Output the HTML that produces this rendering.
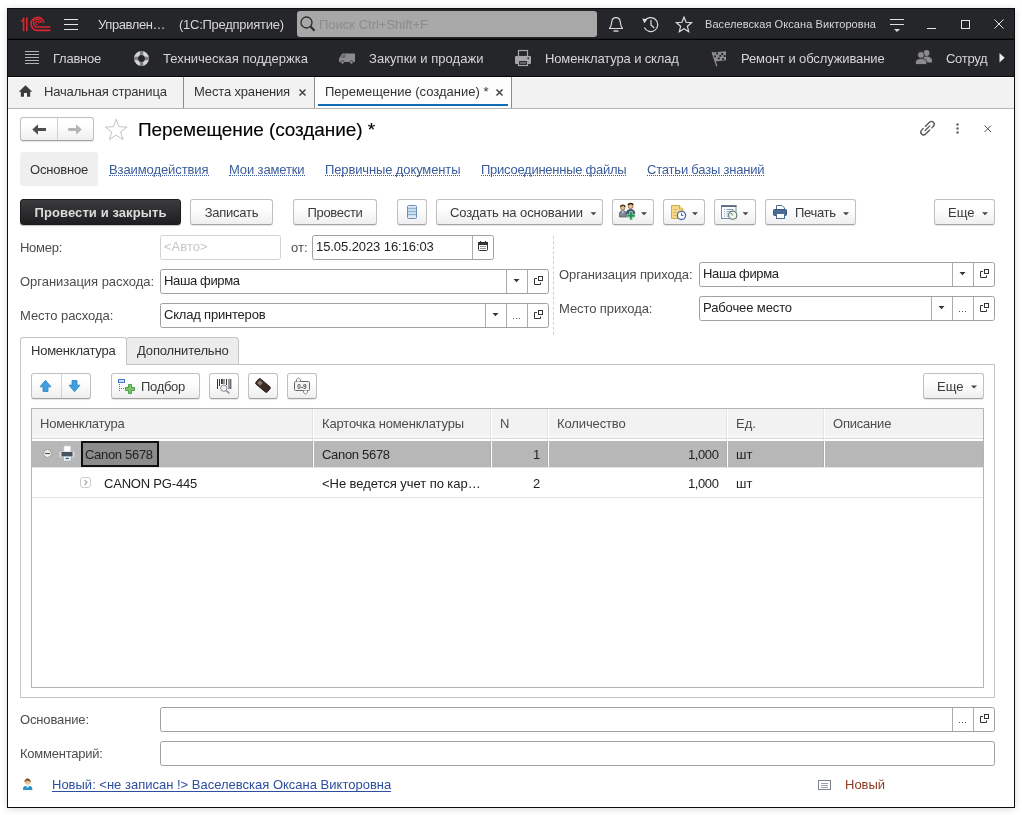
<!DOCTYPE html>
<html lang="ru">
<head>
<meta charset="utf-8">
<title>Перемещение (создание) *</title>
<style>
html,body{margin:0;padding:0;}
body{width:1022px;height:815px;overflow:hidden;background:#fff;font-family:"Liberation Sans",Arial,sans-serif;font-size:13px;color:#333;position:relative;}
.a{position:absolute;white-space:nowrap;}
.t{position:absolute;white-space:nowrap;line-height:16px;height:16px;}
#shadow{left:8px;top:10px;width:1006px;height:798px;box-shadow:0 0 7px 1px rgba(0,0,0,.15);}
#win{left:7px;top:8px;width:1006px;height:798px;border:1px solid #0d0d0f;background:#fff;}
#dark{left:8px;top:9px;width:1006px;height:67px;background:#25262a;border-bottom:1px solid #050506;}
#darksep{left:8px;top:38px;width:1006px;height:2px;background:linear-gradient(#1a1b1d 50%,#050506 50%);}
#search{left:297px;top:11px;width:300px;height:26px;background:#a8a8a8;border-radius:3px;}
.w{color:#d6d6d6;}
#tabbar{left:8px;top:77px;width:1006px;height:32px;background:#f2f2f2;border-top:1px solid #fff;border-bottom:1px solid #b5b5b5;box-sizing:border-box;}
.tabsep{top:77px;width:1px;height:31px;background:#8c8c8c;}
#acttab{left:315px;top:77px;width:196px;height:31px;background:#fdfdfd;}
#actline{left:318px;top:104px;width:190px;height:2px;background:#106cb4;}
.btn{position:absolute;box-sizing:border-box;height:26px;border:1px solid #c0c0c0;border-bottom-color:#a2a2a2;border-radius:3px;background:linear-gradient(#fff 30%,#efefef);box-shadow:0 1px 1px rgba(0,0,0,.10);white-space:nowrap;line-height:26px;text-align:center;color:#3a3a3a;}
.fld{position:absolute;box-sizing:border-box;height:25px;border:1px solid #a0a0a0;border-radius:2.5px;background:#fff;white-space:nowrap;line-height:21px;padding-left:3px;color:#222;}
.fsep{position:absolute;top:0;width:1px;height:23px;background:#ababab;}
.lbl{color:#4c4c4c;}
.colsep{top:409px;width:1px;height:58px;background:#fff;box-shadow:-1px 0 0 rgba(0,0,0,.06);}
.dl{color:#3a5c9c;height:13px;border-bottom:1px dotted #3a5c9c;}
.sl{color:#2e4f9e;height:14px;border-bottom:1px solid #2e4f9e;}
.dk{background:linear-gradient(#3c3c3e,#1e1e20);border-color:#1c1c1e;color:#dcdcdc;font-weight:bold;letter-spacing:.28px;box-shadow:0 1px 1px rgba(0,0,0,.25);}
.caret{position:absolute;width:0;height:0;border-left:3px solid transparent;border-right:3px solid transparent;border-top:3px solid #444;}
</style>
</head>
<body>
<div id="root" style="position:absolute;left:0;top:0;width:1022px;height:815px;will-change:transform;">
<div class="a" id="shadow"></div>
<div class="a" id="win"></div>
<div class="a" id="dark"></div>
<div class="a" id="darksep"></div>

<!-- TITLE BAR -->
<div class="t w" style="left:98px;top:17px;letter-spacing:-0.398px;">Управлен…</div>
<div class="t w" style="left:179px;top:17px;letter-spacing:-0.263px;">(1С:Предприятие)</div>
<div class="a" id="search"></div>
<div class="t" style="left:319px;top:17px;color:#8c8c8c;">Поиск Ctrl+Shift+F</div>
<div class="t w" style="left:705px;top:16px;font-size:11px;letter-spacing:.08px;">Васелевская Оксана Викторовна</div>

<!-- NAV BAR -->
<div class="t w" style="left:53px;top:51px;letter-spacing:-0.239px;">Главное</div>
<div class="t w" style="left:163px;top:51px;">Техническая поддержка</div>
<div class="t w" style="left:369px;top:51px;letter-spacing:0.036px;">Закупки и продажи</div>
<div class="t w" style="left:545px;top:51px;letter-spacing:-0.133px;">Номенклатура и склад</div>
<div class="t w" style="left:741px;top:51px;letter-spacing:-0.119px;">Ремонт и обслуживание</div>
<div class="t w" style="left:946px;top:51px;letter-spacing:-0.272px;">Сотруд</div>

<!-- OPEN WINDOWS TAB BAR -->
<div class="a" id="tabbar"></div>
<div class="a tabsep" style="left:183px;"></div>
<div class="a tabsep" style="left:314px;"></div>
<div class="a" id="acttab"></div>
<div class="a tabsep" style="left:511px;"></div>
<div class="a" id="actline"></div>
<div class="t" style="left:44px;top:84px;letter-spacing:-0.166px;">Начальная страница</div>
<div class="t" style="left:194px;top:84px;letter-spacing:-0.158px;">Места хранения</div>
<div class="t" style="left:325px;top:84px;">Перемещение (создание) *</div>


<!-- ICONS: header -->
<svg class="a" style="left:0;top:0;" width="1022" height="110" viewBox="0 0 1022 110" fill="none">
<!-- 1C logo -->
<g stroke="#dc2530" stroke-width="1.6" fill="none">
<path d="M21.3 21.6L23.6 19.2M23.6 17.6V31.3M26.8 17.4V31.3"/>
<path d="M43.9 22.8A6.5 6.5 0 1 0 37.5 30.4H50.4"/>
<path d="M41.3 23A3.9 3.9 0 1 0 37.5 27H50.4" stroke-width="1.5"/>
<path d="M39.2 23.4A1.7 1.7 0 1 0 37.5 24.8" stroke-width="1.2"/>
</g>
<!-- hamburger -->
<path d="M64 19.5H78M64 24.5H78M64 29.5H78" stroke="#e4e4e4" stroke-width="1"/>
<!-- search icon -->
<circle cx="306.500" cy="22.500" r="5.500" stroke="#2a2a2a" stroke-width="1.300"/>
<path d="M310.500 26.500L314.500 30.800" stroke="#2a2a2a" stroke-width="2"/>
<!-- bell -->
<path d="M609.500 28.500H622.500C620.500 26.500 620.500 24 620.200 21.500C619.800 18.500 617.800 17.600 616 17.600C614.200 17.600 612.200 18.500 611.800 21.500C611.500 24 611.500 26.500 609.500 28.500Z" stroke="#dedede" stroke-width="1.200" stroke-linejoin="round"/>
<path d="M613.500 31H618.500" stroke="#dedede" stroke-width="1.400"/>
<!-- history -->
<path d="M644.600 21.200A7 7 0 1 1 644.400 27.500" stroke="#dedede" stroke-width="1.200"/>
<path d="M642.300 18.600L647.300 19.200L644.300 23.200Z" fill="#dedede"/>
<path d="M651 20V25L654.200 28" stroke="#dedede" stroke-width="1.200"/>
<!-- star -->
<path d="M684 17.200L686.100 22.300L691.600 22.700L687.400 26.300L688.700 31.700L684 28.800L679.300 31.700L680.600 26.300L676.400 22.700L681.900 22.300Z" stroke="#dedede" stroke-width="1.200" stroke-linejoin="miter"/>
<!-- menu lines -->
<path d="M890 19.500H904M890 24.500H904" stroke="#dedede" stroke-width="1"/>
<path d="M894 29H900L897 32Z" fill="#dedede"/>
<!-- window buttons -->
<path d="M927 28.500H936" stroke="#e6e6e6" stroke-width="1"/>
<rect x="961.500" y="20.500" width="8" height="8" stroke="#e6e6e6" stroke-width="1"/>
<path d="M994.500 19.500L1003.500 28.500M1003.500 19.500L994.500 28.500" stroke="#e6e6e6" stroke-width="1"/>
<!-- nav: main lines -->
<path d="M25 51.500H39M25 54.500H39M25 57.500H39M25 60.500H39M25 63.500H39" stroke="#b4b4b4" stroke-width="1"/>
<!-- lifebuoy -->
<circle cx="141.500" cy="58.500" r="5.500" stroke="#d6d6d6" stroke-width="4"/>
<path d="M141.500 51V55M141.500 62V66M134 58.500H138M145 58.500H149" stroke="#808080" stroke-width="3.400"/>
<!-- van -->
<path d="M339 62V58.500L342.500 53.500H355V62Z" fill="#8c8c8c"/>
<circle cx="342.500" cy="62.300" r="1.700" fill="#8c8c8c" stroke="#242528" stroke-width=".6"/>
<circle cx="351.500" cy="62.300" r="1.700" fill="#8c8c8c" stroke="#242528" stroke-width=".6"/>
<path d="M340.600 58L343 54.600H345.600V58Z" fill="#6a6a6a"/>
<!-- printer -->
<rect x="518.500" y="50.500" width="9" height="6" stroke="#a6a6a6" stroke-width="1.200"/>
<rect x="515" y="56" width="16" height="8" rx="1" fill="#a6a6a6"/>
<rect x="518.500" y="60.500" width="9" height="5" fill="#242528" stroke="#a6a6a6" stroke-width="1.200"/>
<path d="M520 63H526" stroke="#a6a6a6" stroke-width="1"/>
<rect x="527.500" y="57.500" width="1.500" height="1.500" fill="#242528"/>
<!-- flag -->
<path d="M712 52.400L726 51.200V60.300L715.300 61.600Z" fill="#8e8e8e"/>
<path d="M712.300 52.500L716.600 65.800" stroke="#8e8e8e" stroke-width="1.300" stroke-linecap="round"/>
<path d="M716.200 52.600h1.9v1.8h-1.9zM721.300 53.100h1.9v1.8h-1.9zM714.100 55.400h1.9v1.8h-1.9zM719.300 54.900h1.9v1.8h-1.9zM723.700 55.100h1.9v1.8h-1.9zM717.800 57.500h1.9v1.8h-1.9zM722.100 58.200h1.9v1.8h-1.9z" fill="#222225"/>
<!-- people -->
<g fill="#8c8c8c">
<circle cx="926.500" cy="53" r="3"/>
<path d="M921.500 61C921.500 57.500 924 56.500 926.500 56.500C929 56.500 932 57.500 932 61V62.500H921.500Z"/>
<circle cx="921" cy="55" r="3.400" stroke="#242528" stroke-width=".8"/>
<path d="M915.500 64.500V62.500C915.500 59.500 918 58.500 921 58.500C924 58.500 926.800 59.500 926.800 62.500V64.500Z" stroke="#242528" stroke-width=".8"/>
</g>
<!-- scroll arrow -->
<path d="M999.500 53L1004.700 57.700L999.500 62.400Z" fill="#ececec"/>
<!-- home -->
<path d="M18.800 91.800L25.500 85.200L32.200 91.800H30.200V96.800H27V93H24V96.800H20.800V91.800Z" fill="#3c3c3c"/>
<!-- tab close x -->
<path d="M299.500 89.500L305.500 95.500M305.500 89.500L299.500 95.500" stroke="#444" stroke-width="1.500"/>
<path d="M496.500 89.500L502.500 95.500M502.500 89.500L496.500 95.500" stroke="#444" stroke-width="1.500"/>
</svg>

<!-- FORM HEADER -->
<div class="btn" style="left:20px;top:117px;width:74px;height:24px;"></div>
<div class="a" style="left:57px;top:118px;width:1px;height:22px;background:#d2d2d2;"></div>
<div class="t" style="left:138px;top:119px;font-size:19px;line-height:22px;height:22px;color:#000;letter-spacing:-.08px;-webkit-text-stroke:.12px #000;">Перемещение (создание) *</div>

<!-- FORM NAV LINKS -->
<div class="a" style="left:20px;top:152px;width:78px;height:34px;background:#efefef;border-radius:3px;"></div>
<div class="t" style="left:30px;top:162px;letter-spacing:-0.197px;">Основное</div>
<div class="t dl" style="left:109px;top:162px;letter-spacing:-0.089px;">Взаимодействия</div>
<div class="t dl" style="left:229px;top:162px;letter-spacing:-0.129px;">Мои заметки</div>
<div class="t dl" style="left:325px;top:162px;letter-spacing:-0.125px;">Первичные документы</div>
<div class="t dl" style="left:481px;top:162px;letter-spacing:-0.259px;">Присоединенные файлы</div>
<div class="t dl" style="left:647px;top:162px;letter-spacing:-0.198px;">Статьи базы знаний</div>

<!-- COMMAND BAR -->
<div class="btn dk" style="left:20px;top:199px;width:161px;letter-spacing:0.092px;">Провести и закрыть</div>
<div class="btn" style="left:190px;top:199px;width:83px;letter-spacing:-0.258px;">Записать</div>
<div class="btn" style="left:293px;top:199px;width:84px;letter-spacing:-0.289px;">Провести</div>
<div class="btn" style="left:397px;top:199px;width:30px;"></div>
<div class="btn" style="left:436px;top:199px;width:167px;text-align:left;padding-left:13px;letter-spacing:-0.094px;">Создать на основании</div>
<div class="btn" style="left:612px;top:199px;width:42px;"></div>
<div class="btn" style="left:663px;top:199px;width:42px;"></div>
<div class="btn" style="left:714px;top:199px;width:42px;"></div>
<div class="btn" style="left:765px;top:199px;width:91px;text-align:left;padding-left:29px;letter-spacing:-0.332px;">Печать</div>
<div class="btn" style="left:934px;top:199px;width:61px;text-align:left;padding-left:13px;">Еще</div>

<!-- FIELDS LEFT -->
<div class="t lbl" style="left:20px;top:240px;letter-spacing:-0.273px;">Номер:</div>
<div class="fld" style="left:160px;top:235px;width:121px;border-color:#d2d2d2;color:#c6c6c6;">&lt;Авто&gt;</div>
<div class="t lbl" style="left:291px;top:240px;">от:</div>
<div class="fld" style="left:312px;top:235px;width:182px;letter-spacing:-0.08px;">15.05.2023 16:16:03<div class="fsep" style="left:159px;"></div></div>
<div class="t lbl" style="left:20px;top:274px;letter-spacing:-0.031px;">Организация расхода:</div>
<div class="fld" style="left:160px;top:269px;width:389px;letter-spacing:-0.355px;">Наша фирма<div class="fsep" style="left:345px;"></div><div class="fsep" style="left:366px;"></div></div>
<div class="t lbl" style="left:20px;top:308px;letter-spacing:-0.06px;">Место расхода:</div>
<div class="fld" style="left:160px;top:303px;width:389px;letter-spacing:-0.197px;">Склад принтеров<div class="fsep" style="left:324px;"></div><div class="fsep" style="left:345px;"></div><div class="fsep" style="left:366px;"></div></div>

<div class="a" style="left:553px;top:236px;width:0;height:99px;border-left:1px dashed #d0d0d0;"></div>

<!-- FIELDS RIGHT -->
<div class="t lbl" style="left:559px;top:267px;letter-spacing:-0.094px;">Организация прихода:</div>
<div class="fld" style="left:699px;top:262px;width:296px;letter-spacing:-0.355px;">Наша фирма<div class="fsep" style="left:252px;"></div><div class="fsep" style="left:273px;"></div></div>
<div class="t lbl" style="left:559px;top:301px;letter-spacing:-0.087px;">Место прихода:</div>
<div class="fld" style="left:699px;top:296px;width:296px;letter-spacing:-0.109px;">Рабочее место<div class="fsep" style="left:231px;"></div><div class="fsep" style="left:252px;"></div><div class="fsep" style="left:273px;"></div></div>

<!-- PAGES -->
<div class="a" style="left:20px;top:364px;width:975px;height:334px;box-sizing:border-box;border:1px solid #c4c4c4;"></div>
<div class="a" style="left:126px;top:337px;width:113px;height:28px;box-sizing:border-box;border:1px solid #c4c4c4;background:#ececec;border-radius:3px 3px 0 0;"></div>
<div class="a" style="left:20px;top:337px;width:107px;height:28px;box-sizing:border-box;border:1px solid #c4c4c4;border-bottom:none;background:#fff;border-radius:3px 3px 0 0;"></div>
<div class="t" style="left:31px;top:343px;letter-spacing:-0.237px;">Номенклатура</div>
<div class="t" style="left:137px;top:343px;letter-spacing:-0.152px;">Дополнительно</div>

<!-- TABLE TOOLBAR -->
<div class="btn" style="left:31px;top:373px;width:60px;"></div>
<div class="a" style="left:61px;top:374px;width:1px;height:24px;background:#d2d2d2;"></div>
<div class="btn" style="left:111px;top:373px;width:89px;text-align:left;padding-left:29px;letter-spacing:-0.314px;">Подбор</div>
<div class="btn" style="left:209px;top:373px;width:30px;"></div>
<div class="btn" style="left:248px;top:373px;width:30px;"></div>
<div class="btn" style="left:287px;top:373px;width:30px;"></div>
<div class="btn" style="left:923px;top:373px;width:61px;text-align:left;padding-left:13px;">Еще</div>

<!-- TABLE -->
<div class="a" style="left:31px;top:408px;width:953px;height:280px;box-sizing:border-box;border:1px solid #b4b4b4;background:#fff;"></div>
<div class="a" style="left:32px;top:409px;width:951px;height:29px;background:linear-gradient(#f2f2f2 85%,#f7f7f7);"></div>
<div class="a" style="left:32px;top:438px;width:951px;height:1px;background:#d8d8d8;"></div>
<div class="a" style="left:32px;top:441px;width:951px;height:26px;background:#b7b7b7;"></div>
<div class="a" style="left:32px;top:467px;width:951px;height:1px;background:#e4e4e4;"></div>
<div class="a" style="left:32px;top:497px;width:951px;height:1px;background:#e4e4e4;"></div>
<div class="a colsep" style="left:313px;"></div><div class="a colsep" style="left:491px;"></div><div class="a colsep" style="left:548px;"></div><div class="a colsep" style="left:727px;"></div><div class="a colsep" style="left:824px;"></div>
<div class="t lbl" style="left:40px;top:416px;letter-spacing:-0.237px;">Номенклатура</div>
<div class="t lbl" style="left:322px;top:416px;letter-spacing:-0.154px;">Карточка номенклатуры</div>
<div class="t lbl" style="left:500px;top:416px;">N</div>
<div class="t lbl" style="left:557px;top:416px;letter-spacing:-0.121px;">Количество</div>
<div class="t lbl" style="left:736px;top:416px;">Ед.</div>
<div class="t lbl" style="left:833px;top:416px;letter-spacing:-0.204px;">Описание</div>

<div class="a" style="left:81px;top:441px;width:78px;height:26px;box-sizing:border-box;border:2px solid #111;background:#8c8c8c;"></div>
<div class="t" style="left:85px;top:447px;color:#222;letter-spacing:-0.304px;">Canon 5678</div>
<div class="t" style="left:322px;top:447px;color:#222;letter-spacing:-0.304px;">Canon 5678</div>
<div class="t" style="left:533px;top:447px;color:#222;">1</div>
<div class="t" style="left:688px;top:447px;color:#222;letter-spacing:-0.409px;">1,000</div>
<div class="t" style="left:736px;top:447px;color:#222;">шт</div>

<div class="t" style="left:104px;top:476px;color:#222;letter-spacing:-0.198px;">CANON PG-445</div>
<div class="t" style="left:322px;top:476px;color:#222;letter-spacing:-0.051px;">&lt;Не ведется учет по кар…</div>
<div class="t" style="left:533px;top:476px;color:#222;">2</div>
<div class="t" style="left:688px;top:476px;color:#222;letter-spacing:-0.409px;">1,000</div>
<div class="t" style="left:736px;top:476px;color:#222;">шт</div>

<!-- BOTTOM FIELDS -->
<div class="t lbl" style="left:20px;top:712px;letter-spacing:-0.14px;">Основание:</div>
<div class="fld" style="left:160px;top:707px;width:835px;"><div class="fsep" style="left:791px;"></div><div class="fsep" style="left:812px;"></div></div>
<div class="t lbl" style="left:20px;top:746px;letter-spacing:-0.242px;">Комментарий:</div>
<div class="fld" style="left:160px;top:741px;width:835px;"></div>

<!-- FOOTER -->
<div class="t sl" style="left:52px;top:777px;">Новый: &lt;не записан !&gt; Васелевская Оксана Викторовна</div>
<div class="t" style="left:845px;top:777px;color:#8e3a20;">Новый</div>
<!-- ICONS: form -->
<svg class="a" style="left:0;top:108px;" width="1022" height="707" viewBox="0 108 1022 707" fill="none">
<path d="M32.300 129.500L38 124.200V128H46V131H38V134.800Z" fill="#4e4e4e"/>
<path d="M81.800 129.500L76.100 124.200V128H68.200V131H76.100V134.800Z" fill="#b4b4b4"/>
<path d="M116.200 119.200L118.900 126.800L127.100 127L120.600 131.900L123 139.600L116.200 135L109.400 139.600L111.800 131.900L105.300 127L113.500 126.800Z" stroke="#c2c2c2" stroke-width="1" stroke-linejoin="miter"/>
<g stroke="#555" stroke-width="1.300" stroke-linecap="round" transform="rotate(-45 927.500 128.200)"><path d="M927.200 125.400H933A2.800 2.800 0 0 1 933 131H930.800"/><path d="M927.800 131H922A2.800 2.800 0 0 1 922 125.400H924.200"/><path d="M924.200 128.200H930.800"/></g>
<circle cx="957.5" cy="124.4" r="1.25" fill="#666"/><circle cx="957.5" cy="128.4" r="1.25" fill="#666"/><circle cx="957.5" cy="132.4" r="1.25" fill="#666"/>
<path d="M984.500 125.500L991 132M991 125.500L984.500 132" stroke="#555" stroke-width="1"/>
<rect x="407.500" y="205.500" width="9" height="13" rx="1" fill="#dfeaf5" stroke="#6a8fb8"/>
<path d="M408 208.500H416M408 211.500H416M408 214.500H416" stroke="#8fb2d6" stroke-width="1.600"/>
<path d="M590.5 212.2H596.5L593.5 215.3Z" fill="#444"/>
<path d="M641.0 212.2H647.0L644.0 215.3Z" fill="#444"/>
<path d="M692.0 212.2H698.0L695.0 215.3Z" fill="#444"/>
<path d="M742.5 212.2H748.5L745.5 215.3Z" fill="#444"/>
<path d="M843.0 212.2H849.0L846.0 215.3Z" fill="#444"/>
<path d="M982.0 212.2H988.0L985.0 215.3Z" fill="#444"/>
<path d="M971.0 385.5H977.0L974.0 388.6Z" fill="#444"/>
<g><circle cx="622.800" cy="207.800" r="2.200" fill="#e9bd90" stroke="#7a5430" stroke-width=".7"/><path d="M620.500 206.800C620.800 204.600 624.800 204.600 625.100 206.800" stroke="#4a3018" stroke-width="1.400" fill="none"/><path d="M619.500 217V213.300C619.500 211.500 621 210.700 622.800 210.700C624.600 210.700 626.100 211.500 626.100 213.300V217Z" fill="#7d8796" stroke="#4c5666" stroke-width=".7"/><path d="M622.100 211L622.800 214.500L623.500 211Z" fill="#f0f0f0"/><circle cx="630.600" cy="206.300" r="2.400" fill="#e9bd90" stroke="#7a5430" stroke-width=".7"/><path d="M628.100 205.200C628.500 202.800 632.700 202.800 633.100 205.200" stroke="#3a2614" stroke-width="1.500" fill="none"/><path d="M626.600 217V212.300C626.600 210.300 628.500 209.500 630.600 209.500C632.700 209.500 634.600 210.300 634.600 212.300V217Z" fill="#3f5878" stroke="#2a3e5a" stroke-width=".7"/><path d="M629.700 211.500H632.300V214.300H635V217H632.300V219.900H629.700V217H627V214.300H629.700Z" fill="#1f9450" stroke="#d8f0e0" stroke-width=".6"/></g>
<g><path d="M671.500 205.500H679.500L683 209V218.500H671.500Z" fill="#f5d98a" stroke="#d4a941"/><path d="M679.500 205.500V209H683" stroke="#d4a941" fill="#fbeec2"/><path d="M673.500 209.500H677M673.500 212.500H677M673.500 215.500H676" stroke="#d9b55a" stroke-width="1"/><circle cx="681.500" cy="215.400" r="4.100" fill="#fff" stroke="#4a66a8" stroke-width="1.300"/><path d="M681.500 213.200V215.500H683.400" stroke="#4a66a8" stroke-width="1"/></g>
<g><rect x="721.500" y="205.800" width="14.500" height="12.700" fill="#fdfdfd" stroke="#6b7f98" stroke-width=".9"/><rect x="721" y="205.300" width="15.500" height="1.700" fill="#56697f"/><path d="M724 209.500h1m1.500 0h7M724 211.700h1m1.500 0h5M724 213.900h1m1.500 0h3.500M724 216.100h1m1.500 0h2.500" stroke="#6f93c4" stroke-width=".9"/><circle cx="732.700" cy="215.200" r="4.100" fill="#f2f8f2" stroke="#5a7a68" stroke-width="1.100"/><path d="M730.700 212.800L732.800 215.300" stroke="#3c5a48" stroke-width="1"/></g>
<g><path d="M776.500 210V205.500H782L784.500 208V210" fill="#fff" stroke="#4a6d94"/><rect x="773.500" y="209.500" width="13" height="6" rx="1" fill="#4a6d94" stroke="#34567c"/><rect x="776.500" y="213.500" width="8" height="5" fill="#fff" stroke="#4a6d94"/></g>
<g><rect x="478.500" y="242.500" width="9" height="8" rx="1" fill="#fff" stroke="#333"/><rect x="478" y="242" width="10" height="3" fill="#333"/><path d="M480.500 241V243M485.500 241V243" stroke="#333" stroke-width="1.200"/><path d="M480.500 246.500h1m1 0h1m1 0h1M480.500 248.500h1m1 0h1m1 0h1" stroke="#333" stroke-width="1"/></g>
<path d="M513.5 279.0H519.5L516.5 282.2Z" fill="#333"/>
<rect x="538.5" y="276.5" width="4" height="4" stroke="#333" fill="none"/><path d="M537 278.5H534.5V284.5H540.5V282.5" stroke="#333" fill="none"/>
<path d="M492.5 313.0H498.5L495.5 316.2Z" fill="#333"/>
<path d="M513.0 318.5h1m2 0h1m2 0h1" stroke="#555" stroke-width="1"/>
<rect x="538.5" y="310.5" width="4" height="4" stroke="#333" fill="none"/><path d="M537 312.5H534.5V318.5H540.5V316.5" stroke="#333" fill="none"/>
<path d="M959.5 272.0H965.5L962.5 275.2Z" fill="#333"/>
<rect x="984.5" y="269.5" width="4" height="4" stroke="#333" fill="none"/><path d="M983 271.5H980.5V277.5H986.5V275.5" stroke="#333" fill="none"/>
<path d="M938.5 306.0H944.5L941.5 309.2Z" fill="#333"/>
<path d="M959.0 311.5h1m2 0h1m2 0h1" stroke="#555" stroke-width="1"/>
<rect x="984.5" y="303.5" width="4" height="4" stroke="#333" fill="none"/><path d="M983 305.5H980.5V311.5H986.5V309.5" stroke="#333" fill="none"/>
<path d="M959.0 722.5h1m2 0h1m2 0h1" stroke="#555" stroke-width="1"/>
<rect x="984.5" y="714.5" width="4" height="4" stroke="#333" fill="none"/><path d="M983 716.5H980.5V722.5H986.5V720.5" stroke="#333" fill="none"/>
<path d="M45.500 380.300L51 386.800H48V391.500H43V386.800H40Z" fill="#3fa0e0" stroke="#2a82c4" stroke-width=".8" stroke-linejoin="round"/>
<path d="M74.500 391.700L80 385.200H77V380.500H72V385.200H69Z" fill="#3fa0e0" stroke="#2a82c4" stroke-width=".8" stroke-linejoin="round"/>
<g><rect x="118.500" y="379.500" width="6" height="3" fill="#cfe0f5" stroke="#4a78c0"/><path d="M119.500 384V391.500M121 388.500H125" stroke="#4a78c0" stroke-width="1" stroke-dasharray="1 1"/><path d="M128.500 384.500H131.500V387.500H134.500V390.500H131.500V393.500H128.500V390.500H125.500V387.500H128.500Z" fill="#7cc36a" stroke="#3f9a3a" stroke-width=".9"/></g>
<g><path d="M217.500 379V389M219.500 379V386M221.500 379V384M224 379V384M226.500 379V385M229 379V389M230.800 379V389" stroke="#333" stroke-width="1"/><path d="M222 379V384" stroke="#333" stroke-width="1.600"/><circle cx="223.800" cy="388.200" r="3.200" fill="#e8eef4" stroke="#8a8f96" stroke-width="1"/><path d="M226.200 390.600L229.500 393.500" stroke="#8a8f96" stroke-width="1.600"/></g>
<g transform="rotate(40 263 385.500)"><rect x="255.500" y="382" width="15" height="7" rx="1.500" fill="#3a2c24" stroke="#1e1612" stroke-width=".8"/><rect x="257" y="383.500" width="4" height="4" fill="#8a7a6a"/></g>
<g><rect x="294.500" y="381.500" width="15" height="9" rx="1" fill="#f4f4f4" stroke="#666"/><path d="M296.500 381.500V379.500L298.500 378L300.500 379.500V381.500M303.500 390.500V392.500L305.500 394L307.500 392.500V390.500" stroke="#777" stroke-width=".9" fill="#fff"/><text x="302" y="388.800" font-family="Liberation Sans, sans-serif" font-size="6.500" font-weight="bold" fill="#555" text-anchor="middle">0-9</text></g>
<circle cx="47.500" cy="453.500" r="4" fill="#f2f2f2" stroke="#9a9a9a" stroke-width="1"/><path d="M45 453.500H50" stroke="#555" stroke-width="1.200"/>
<g><rect x="64" y="446" width="6.500" height="6" fill="#fdfdfd" stroke="#d8d8d8" stroke-width=".6"/><rect x="59.500" y="451.500" width="15" height="6" rx="1.500" fill="#d9dde2"/><rect x="61.500" y="452" width="11" height="4.500" fill="#47525e"/><rect x="63.500" y="456.500" width="7.500" height="4.500" fill="#eef6fb" stroke="#9fb6c6" stroke-width=".7"/><path d="M65.500 458.500H69" stroke="#47525e" stroke-width="1.200"/></g>
<rect x="80.500" y="477.500" width="10" height="10" rx="2.500" fill="#fff" stroke="#cdcdcd"/><path d="M84.500 480L87 482.500L84.500 485" stroke="#aaa" stroke-width="1.100"/>
<g><path d="M23 790V788.500C23 786.500 25 785.800 27.600 785.800C30.200 785.800 32.300 786.500 32.300 788.500V790Z" fill="#2f93c8"/><path d="M26.300 786L27.600 788L28.900 786Z" fill="#fff"/><circle cx="27.600" cy="782" r="2.800" fill="#f0c090"/><path d="M24.800 781.800C24.800 777.800 30.400 777.800 30.400 781.800C29.500 780 25.800 780 24.800 781.800Z" fill="#7a4a20" stroke="#7a4a20" stroke-width=".6"/></g>
<rect x="818.500" y="780.500" width="12" height="9" fill="#fff" stroke="#7c828a"/><path d="M821 783.500H828M821 785.500H828M821 787.500H828" stroke="#9aa0a8" stroke-width="1"/>
</svg>
</div>
</body>
</html>
